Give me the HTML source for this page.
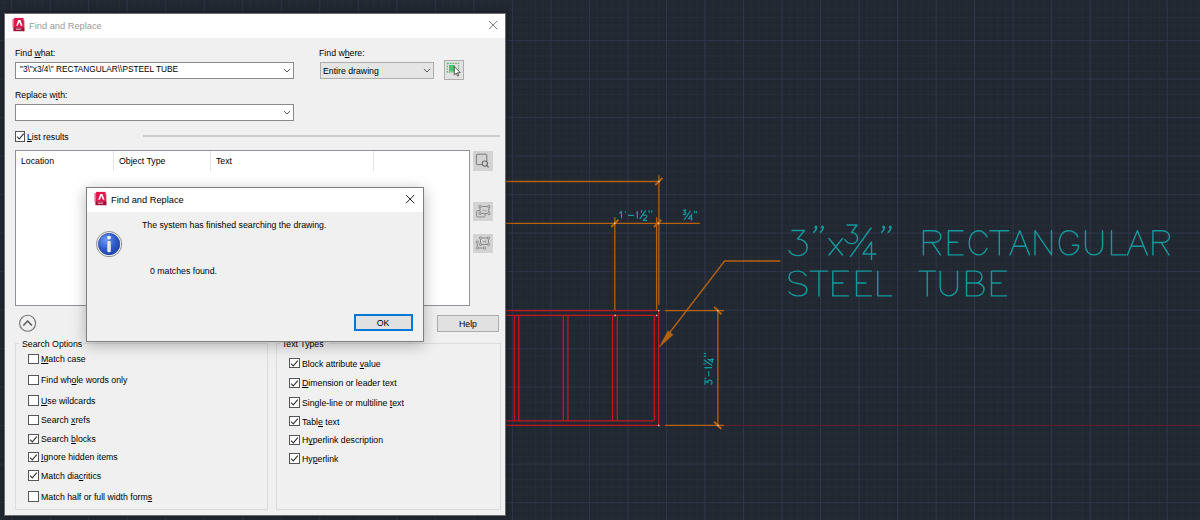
<!DOCTYPE html><html><head><meta charset="utf-8"><style>
html,body{margin:0;padding:0;}
body{width:1200px;height:520px;overflow:hidden;position:relative;background:#222832;font-family:"Liberation Sans",sans-serif;}
.a{position:absolute;box-sizing:border-box;}
.t{position:absolute;white-space:pre;line-height:1;font-family:"Liberation Sans",sans-serif;}
.cb{width:10.5px;height:10.5px;border:1px solid #555;background:#fff;}
u{text-decoration:underline;text-underline-offset:1px;}
</style></head><body>

<svg class="a" style="left:0;top:0" width="1200" height="520"><line x1="3.94" y1="0" x2="3.94" y2="520" stroke="#262d36" stroke-width="1"/><line x1="19.34" y1="0" x2="19.34" y2="520" stroke="#262d36" stroke-width="1"/><line x1="27.05" y1="0" x2="27.05" y2="520" stroke="#262d36" stroke-width="1"/><line x1="34.75" y1="0" x2="34.75" y2="520" stroke="#262d36" stroke-width="1"/><line x1="42.46" y1="0" x2="42.46" y2="520" stroke="#262d36" stroke-width="1"/><line x1="57.86" y1="0" x2="57.86" y2="520" stroke="#262d36" stroke-width="1"/><line x1="65.57" y1="0" x2="65.57" y2="520" stroke="#262d36" stroke-width="1"/><line x1="73.27" y1="0" x2="73.27" y2="520" stroke="#262d36" stroke-width="1"/><line x1="80.98" y1="0" x2="80.98" y2="520" stroke="#262d36" stroke-width="1"/><line x1="96.38" y1="0" x2="96.38" y2="520" stroke="#262d36" stroke-width="1"/><line x1="104.09" y1="0" x2="104.09" y2="520" stroke="#262d36" stroke-width="1"/><line x1="111.79" y1="0" x2="111.79" y2="520" stroke="#262d36" stroke-width="1"/><line x1="119.50" y1="0" x2="119.50" y2="520" stroke="#262d36" stroke-width="1"/><line x1="134.90" y1="0" x2="134.90" y2="520" stroke="#262d36" stroke-width="1"/><line x1="142.61" y1="0" x2="142.61" y2="520" stroke="#262d36" stroke-width="1"/><line x1="150.31" y1="0" x2="150.31" y2="520" stroke="#262d36" stroke-width="1"/><line x1="158.02" y1="0" x2="158.02" y2="520" stroke="#262d36" stroke-width="1"/><line x1="173.42" y1="0" x2="173.42" y2="520" stroke="#262d36" stroke-width="1"/><line x1="181.13" y1="0" x2="181.13" y2="520" stroke="#262d36" stroke-width="1"/><line x1="188.83" y1="0" x2="188.83" y2="520" stroke="#262d36" stroke-width="1"/><line x1="196.54" y1="0" x2="196.54" y2="520" stroke="#262d36" stroke-width="1"/><line x1="211.94" y1="0" x2="211.94" y2="520" stroke="#262d36" stroke-width="1"/><line x1="219.65" y1="0" x2="219.65" y2="520" stroke="#262d36" stroke-width="1"/><line x1="227.35" y1="0" x2="227.35" y2="520" stroke="#262d36" stroke-width="1"/><line x1="235.06" y1="0" x2="235.06" y2="520" stroke="#262d36" stroke-width="1"/><line x1="250.46" y1="0" x2="250.46" y2="520" stroke="#262d36" stroke-width="1"/><line x1="258.17" y1="0" x2="258.17" y2="520" stroke="#262d36" stroke-width="1"/><line x1="265.87" y1="0" x2="265.87" y2="520" stroke="#262d36" stroke-width="1"/><line x1="273.58" y1="0" x2="273.58" y2="520" stroke="#262d36" stroke-width="1"/><line x1="288.98" y1="0" x2="288.98" y2="520" stroke="#262d36" stroke-width="1"/><line x1="296.69" y1="0" x2="296.69" y2="520" stroke="#262d36" stroke-width="1"/><line x1="304.39" y1="0" x2="304.39" y2="520" stroke="#262d36" stroke-width="1"/><line x1="312.10" y1="0" x2="312.10" y2="520" stroke="#262d36" stroke-width="1"/><line x1="327.50" y1="0" x2="327.50" y2="520" stroke="#262d36" stroke-width="1"/><line x1="335.21" y1="0" x2="335.21" y2="520" stroke="#262d36" stroke-width="1"/><line x1="342.91" y1="0" x2="342.91" y2="520" stroke="#262d36" stroke-width="1"/><line x1="350.62" y1="0" x2="350.62" y2="520" stroke="#262d36" stroke-width="1"/><line x1="366.02" y1="0" x2="366.02" y2="520" stroke="#262d36" stroke-width="1"/><line x1="373.73" y1="0" x2="373.73" y2="520" stroke="#262d36" stroke-width="1"/><line x1="381.43" y1="0" x2="381.43" y2="520" stroke="#262d36" stroke-width="1"/><line x1="389.14" y1="0" x2="389.14" y2="520" stroke="#262d36" stroke-width="1"/><line x1="404.54" y1="0" x2="404.54" y2="520" stroke="#262d36" stroke-width="1"/><line x1="412.25" y1="0" x2="412.25" y2="520" stroke="#262d36" stroke-width="1"/><line x1="419.95" y1="0" x2="419.95" y2="520" stroke="#262d36" stroke-width="1"/><line x1="427.66" y1="0" x2="427.66" y2="520" stroke="#262d36" stroke-width="1"/><line x1="443.06" y1="0" x2="443.06" y2="520" stroke="#262d36" stroke-width="1"/><line x1="450.77" y1="0" x2="450.77" y2="520" stroke="#262d36" stroke-width="1"/><line x1="458.47" y1="0" x2="458.47" y2="520" stroke="#262d36" stroke-width="1"/><line x1="466.18" y1="0" x2="466.18" y2="520" stroke="#262d36" stroke-width="1"/><line x1="481.58" y1="0" x2="481.58" y2="520" stroke="#262d36" stroke-width="1"/><line x1="489.29" y1="0" x2="489.29" y2="520" stroke="#262d36" stroke-width="1"/><line x1="496.99" y1="0" x2="496.99" y2="520" stroke="#262d36" stroke-width="1"/><line x1="504.70" y1="0" x2="504.70" y2="520" stroke="#262d36" stroke-width="1"/><line x1="520.10" y1="0" x2="520.10" y2="520" stroke="#262d36" stroke-width="1"/><line x1="527.81" y1="0" x2="527.81" y2="520" stroke="#262d36" stroke-width="1"/><line x1="535.51" y1="0" x2="535.51" y2="520" stroke="#262d36" stroke-width="1"/><line x1="543.22" y1="0" x2="543.22" y2="520" stroke="#262d36" stroke-width="1"/><line x1="558.62" y1="0" x2="558.62" y2="520" stroke="#262d36" stroke-width="1"/><line x1="566.33" y1="0" x2="566.33" y2="520" stroke="#262d36" stroke-width="1"/><line x1="574.03" y1="0" x2="574.03" y2="520" stroke="#262d36" stroke-width="1"/><line x1="581.74" y1="0" x2="581.74" y2="520" stroke="#262d36" stroke-width="1"/><line x1="597.14" y1="0" x2="597.14" y2="520" stroke="#262d36" stroke-width="1"/><line x1="604.85" y1="0" x2="604.85" y2="520" stroke="#262d36" stroke-width="1"/><line x1="612.55" y1="0" x2="612.55" y2="520" stroke="#262d36" stroke-width="1"/><line x1="620.26" y1="0" x2="620.26" y2="520" stroke="#262d36" stroke-width="1"/><line x1="635.66" y1="0" x2="635.66" y2="520" stroke="#262d36" stroke-width="1"/><line x1="643.37" y1="0" x2="643.37" y2="520" stroke="#262d36" stroke-width="1"/><line x1="651.07" y1="0" x2="651.07" y2="520" stroke="#262d36" stroke-width="1"/><line x1="658.78" y1="0" x2="658.78" y2="520" stroke="#262d36" stroke-width="1"/><line x1="674.18" y1="0" x2="674.18" y2="520" stroke="#262d36" stroke-width="1"/><line x1="681.89" y1="0" x2="681.89" y2="520" stroke="#262d36" stroke-width="1"/><line x1="689.59" y1="0" x2="689.59" y2="520" stroke="#262d36" stroke-width="1"/><line x1="697.30" y1="0" x2="697.30" y2="520" stroke="#262d36" stroke-width="1"/><line x1="712.70" y1="0" x2="712.70" y2="520" stroke="#262d36" stroke-width="1"/><line x1="720.41" y1="0" x2="720.41" y2="520" stroke="#262d36" stroke-width="1"/><line x1="728.11" y1="0" x2="728.11" y2="520" stroke="#262d36" stroke-width="1"/><line x1="735.82" y1="0" x2="735.82" y2="520" stroke="#262d36" stroke-width="1"/><line x1="751.22" y1="0" x2="751.22" y2="520" stroke="#262d36" stroke-width="1"/><line x1="758.93" y1="0" x2="758.93" y2="520" stroke="#262d36" stroke-width="1"/><line x1="766.63" y1="0" x2="766.63" y2="520" stroke="#262d36" stroke-width="1"/><line x1="774.34" y1="0" x2="774.34" y2="520" stroke="#262d36" stroke-width="1"/><line x1="789.74" y1="0" x2="789.74" y2="520" stroke="#262d36" stroke-width="1"/><line x1="797.45" y1="0" x2="797.45" y2="520" stroke="#262d36" stroke-width="1"/><line x1="805.15" y1="0" x2="805.15" y2="520" stroke="#262d36" stroke-width="1"/><line x1="812.86" y1="0" x2="812.86" y2="520" stroke="#262d36" stroke-width="1"/><line x1="828.26" y1="0" x2="828.26" y2="520" stroke="#262d36" stroke-width="1"/><line x1="835.97" y1="0" x2="835.97" y2="520" stroke="#262d36" stroke-width="1"/><line x1="843.67" y1="0" x2="843.67" y2="520" stroke="#262d36" stroke-width="1"/><line x1="851.38" y1="0" x2="851.38" y2="520" stroke="#262d36" stroke-width="1"/><line x1="866.78" y1="0" x2="866.78" y2="520" stroke="#262d36" stroke-width="1"/><line x1="874.49" y1="0" x2="874.49" y2="520" stroke="#262d36" stroke-width="1"/><line x1="882.19" y1="0" x2="882.19" y2="520" stroke="#262d36" stroke-width="1"/><line x1="889.90" y1="0" x2="889.90" y2="520" stroke="#262d36" stroke-width="1"/><line x1="905.30" y1="0" x2="905.30" y2="520" stroke="#262d36" stroke-width="1"/><line x1="913.01" y1="0" x2="913.01" y2="520" stroke="#262d36" stroke-width="1"/><line x1="920.71" y1="0" x2="920.71" y2="520" stroke="#262d36" stroke-width="1"/><line x1="928.42" y1="0" x2="928.42" y2="520" stroke="#262d36" stroke-width="1"/><line x1="943.82" y1="0" x2="943.82" y2="520" stroke="#262d36" stroke-width="1"/><line x1="951.53" y1="0" x2="951.53" y2="520" stroke="#262d36" stroke-width="1"/><line x1="959.23" y1="0" x2="959.23" y2="520" stroke="#262d36" stroke-width="1"/><line x1="966.94" y1="0" x2="966.94" y2="520" stroke="#262d36" stroke-width="1"/><line x1="982.34" y1="0" x2="982.34" y2="520" stroke="#262d36" stroke-width="1"/><line x1="990.05" y1="0" x2="990.05" y2="520" stroke="#262d36" stroke-width="1"/><line x1="997.75" y1="0" x2="997.75" y2="520" stroke="#262d36" stroke-width="1"/><line x1="1005.46" y1="0" x2="1005.46" y2="520" stroke="#262d36" stroke-width="1"/><line x1="1020.86" y1="0" x2="1020.86" y2="520" stroke="#262d36" stroke-width="1"/><line x1="1028.57" y1="0" x2="1028.57" y2="520" stroke="#262d36" stroke-width="1"/><line x1="1036.27" y1="0" x2="1036.27" y2="520" stroke="#262d36" stroke-width="1"/><line x1="1043.98" y1="0" x2="1043.98" y2="520" stroke="#262d36" stroke-width="1"/><line x1="1059.38" y1="0" x2="1059.38" y2="520" stroke="#262d36" stroke-width="1"/><line x1="1067.09" y1="0" x2="1067.09" y2="520" stroke="#262d36" stroke-width="1"/><line x1="1074.79" y1="0" x2="1074.79" y2="520" stroke="#262d36" stroke-width="1"/><line x1="1082.50" y1="0" x2="1082.50" y2="520" stroke="#262d36" stroke-width="1"/><line x1="1097.90" y1="0" x2="1097.90" y2="520" stroke="#262d36" stroke-width="1"/><line x1="1105.61" y1="0" x2="1105.61" y2="520" stroke="#262d36" stroke-width="1"/><line x1="1113.31" y1="0" x2="1113.31" y2="520" stroke="#262d36" stroke-width="1"/><line x1="1121.02" y1="0" x2="1121.02" y2="520" stroke="#262d36" stroke-width="1"/><line x1="1136.42" y1="0" x2="1136.42" y2="520" stroke="#262d36" stroke-width="1"/><line x1="1144.13" y1="0" x2="1144.13" y2="520" stroke="#262d36" stroke-width="1"/><line x1="1151.83" y1="0" x2="1151.83" y2="520" stroke="#262d36" stroke-width="1"/><line x1="1159.54" y1="0" x2="1159.54" y2="520" stroke="#262d36" stroke-width="1"/><line x1="1174.94" y1="0" x2="1174.94" y2="520" stroke="#262d36" stroke-width="1"/><line x1="1182.65" y1="0" x2="1182.65" y2="520" stroke="#262d36" stroke-width="1"/><line x1="1190.35" y1="0" x2="1190.35" y2="520" stroke="#262d36" stroke-width="1"/><line x1="1198.06" y1="0" x2="1198.06" y2="520" stroke="#262d36" stroke-width="1"/><line x1="0" y1="9.80" x2="1200" y2="9.80" stroke="#262d36" stroke-width="1"/><line x1="0" y1="17.50" x2="1200" y2="17.50" stroke="#262d36" stroke-width="1"/><line x1="0" y1="25.20" x2="1200" y2="25.20" stroke="#262d36" stroke-width="1"/><line x1="0" y1="32.90" x2="1200" y2="32.90" stroke="#262d36" stroke-width="1"/><line x1="0" y1="48.30" x2="1200" y2="48.30" stroke="#262d36" stroke-width="1"/><line x1="0" y1="56.00" x2="1200" y2="56.00" stroke="#262d36" stroke-width="1"/><line x1="0" y1="63.70" x2="1200" y2="63.70" stroke="#262d36" stroke-width="1"/><line x1="0" y1="71.40" x2="1200" y2="71.40" stroke="#262d36" stroke-width="1"/><line x1="0" y1="86.80" x2="1200" y2="86.80" stroke="#262d36" stroke-width="1"/><line x1="0" y1="94.50" x2="1200" y2="94.50" stroke="#262d36" stroke-width="1"/><line x1="0" y1="102.20" x2="1200" y2="102.20" stroke="#262d36" stroke-width="1"/><line x1="0" y1="109.90" x2="1200" y2="109.90" stroke="#262d36" stroke-width="1"/><line x1="0" y1="125.30" x2="1200" y2="125.30" stroke="#262d36" stroke-width="1"/><line x1="0" y1="133.00" x2="1200" y2="133.00" stroke="#262d36" stroke-width="1"/><line x1="0" y1="140.70" x2="1200" y2="140.70" stroke="#262d36" stroke-width="1"/><line x1="0" y1="148.40" x2="1200" y2="148.40" stroke="#262d36" stroke-width="1"/><line x1="0" y1="163.80" x2="1200" y2="163.80" stroke="#262d36" stroke-width="1"/><line x1="0" y1="171.50" x2="1200" y2="171.50" stroke="#262d36" stroke-width="1"/><line x1="0" y1="179.20" x2="1200" y2="179.20" stroke="#262d36" stroke-width="1"/><line x1="0" y1="186.90" x2="1200" y2="186.90" stroke="#262d36" stroke-width="1"/><line x1="0" y1="202.30" x2="1200" y2="202.30" stroke="#262d36" stroke-width="1"/><line x1="0" y1="210.00" x2="1200" y2="210.00" stroke="#262d36" stroke-width="1"/><line x1="0" y1="217.70" x2="1200" y2="217.70" stroke="#262d36" stroke-width="1"/><line x1="0" y1="225.40" x2="1200" y2="225.40" stroke="#262d36" stroke-width="1"/><line x1="0" y1="240.80" x2="1200" y2="240.80" stroke="#262d36" stroke-width="1"/><line x1="0" y1="248.50" x2="1200" y2="248.50" stroke="#262d36" stroke-width="1"/><line x1="0" y1="256.20" x2="1200" y2="256.20" stroke="#262d36" stroke-width="1"/><line x1="0" y1="263.90" x2="1200" y2="263.90" stroke="#262d36" stroke-width="1"/><line x1="0" y1="279.30" x2="1200" y2="279.30" stroke="#262d36" stroke-width="1"/><line x1="0" y1="287.00" x2="1200" y2="287.00" stroke="#262d36" stroke-width="1"/><line x1="0" y1="294.70" x2="1200" y2="294.70" stroke="#262d36" stroke-width="1"/><line x1="0" y1="302.40" x2="1200" y2="302.40" stroke="#262d36" stroke-width="1"/><line x1="0" y1="317.80" x2="1200" y2="317.80" stroke="#262d36" stroke-width="1"/><line x1="0" y1="325.50" x2="1200" y2="325.50" stroke="#262d36" stroke-width="1"/><line x1="0" y1="333.20" x2="1200" y2="333.20" stroke="#262d36" stroke-width="1"/><line x1="0" y1="340.90" x2="1200" y2="340.90" stroke="#262d36" stroke-width="1"/><line x1="0" y1="356.30" x2="1200" y2="356.30" stroke="#262d36" stroke-width="1"/><line x1="0" y1="364.00" x2="1200" y2="364.00" stroke="#262d36" stroke-width="1"/><line x1="0" y1="371.70" x2="1200" y2="371.70" stroke="#262d36" stroke-width="1"/><line x1="0" y1="379.40" x2="1200" y2="379.40" stroke="#262d36" stroke-width="1"/><line x1="0" y1="394.80" x2="1200" y2="394.80" stroke="#262d36" stroke-width="1"/><line x1="0" y1="402.50" x2="1200" y2="402.50" stroke="#262d36" stroke-width="1"/><line x1="0" y1="410.20" x2="1200" y2="410.20" stroke="#262d36" stroke-width="1"/><line x1="0" y1="417.90" x2="1200" y2="417.90" stroke="#262d36" stroke-width="1"/><line x1="0" y1="433.30" x2="1200" y2="433.30" stroke="#262d36" stroke-width="1"/><line x1="0" y1="441.00" x2="1200" y2="441.00" stroke="#262d36" stroke-width="1"/><line x1="0" y1="448.70" x2="1200" y2="448.70" stroke="#262d36" stroke-width="1"/><line x1="0" y1="456.40" x2="1200" y2="456.40" stroke="#262d36" stroke-width="1"/><line x1="0" y1="471.80" x2="1200" y2="471.80" stroke="#262d36" stroke-width="1"/><line x1="0" y1="479.50" x2="1200" y2="479.50" stroke="#262d36" stroke-width="1"/><line x1="0" y1="487.20" x2="1200" y2="487.20" stroke="#262d36" stroke-width="1"/><line x1="0" y1="494.90" x2="1200" y2="494.90" stroke="#262d36" stroke-width="1"/><line x1="0" y1="510.30" x2="1200" y2="510.30" stroke="#262d36" stroke-width="1"/><line x1="0" y1="518.00" x2="1200" y2="518.00" stroke="#262d36" stroke-width="1"/><line x1="11.64" y1="0" x2="11.64" y2="520" stroke="#30374a" stroke-width="1"/><line x1="50.16" y1="0" x2="50.16" y2="520" stroke="#30374a" stroke-width="1"/><line x1="88.68" y1="0" x2="88.68" y2="520" stroke="#30374a" stroke-width="1"/><line x1="127.20" y1="0" x2="127.20" y2="520" stroke="#30374a" stroke-width="1"/><line x1="165.72" y1="0" x2="165.72" y2="520" stroke="#30374a" stroke-width="1"/><line x1="204.24" y1="0" x2="204.24" y2="520" stroke="#30374a" stroke-width="1"/><line x1="242.76" y1="0" x2="242.76" y2="520" stroke="#30374a" stroke-width="1"/><line x1="281.28" y1="0" x2="281.28" y2="520" stroke="#30374a" stroke-width="1"/><line x1="319.80" y1="0" x2="319.80" y2="520" stroke="#30374a" stroke-width="1"/><line x1="358.32" y1="0" x2="358.32" y2="520" stroke="#30374a" stroke-width="1"/><line x1="396.84" y1="0" x2="396.84" y2="520" stroke="#30374a" stroke-width="1"/><line x1="435.36" y1="0" x2="435.36" y2="520" stroke="#30374a" stroke-width="1"/><line x1="473.88" y1="0" x2="473.88" y2="520" stroke="#30374a" stroke-width="1"/><line x1="512.40" y1="0" x2="512.40" y2="520" stroke="#30374a" stroke-width="1"/><line x1="550.92" y1="0" x2="550.92" y2="520" stroke="#30374a" stroke-width="1"/><line x1="589.44" y1="0" x2="589.44" y2="520" stroke="#30374a" stroke-width="1"/><line x1="627.96" y1="0" x2="627.96" y2="520" stroke="#30374a" stroke-width="1"/><line x1="666.48" y1="0" x2="666.48" y2="520" stroke="#30374a" stroke-width="1"/><line x1="705.00" y1="0" x2="705.00" y2="520" stroke="#30374a" stroke-width="1"/><line x1="743.52" y1="0" x2="743.52" y2="520" stroke="#30374a" stroke-width="1"/><line x1="782.04" y1="0" x2="782.04" y2="520" stroke="#30374a" stroke-width="1"/><line x1="820.56" y1="0" x2="820.56" y2="520" stroke="#30374a" stroke-width="1"/><line x1="859.08" y1="0" x2="859.08" y2="520" stroke="#30374a" stroke-width="1"/><line x1="897.60" y1="0" x2="897.60" y2="520" stroke="#30374a" stroke-width="1"/><line x1="936.12" y1="0" x2="936.12" y2="520" stroke="#30374a" stroke-width="1"/><line x1="974.64" y1="0" x2="974.64" y2="520" stroke="#30374a" stroke-width="1"/><line x1="1013.16" y1="0" x2="1013.16" y2="520" stroke="#30374a" stroke-width="1"/><line x1="1051.68" y1="0" x2="1051.68" y2="520" stroke="#30374a" stroke-width="1"/><line x1="1090.20" y1="0" x2="1090.20" y2="520" stroke="#30374a" stroke-width="1"/><line x1="1128.72" y1="0" x2="1128.72" y2="520" stroke="#30374a" stroke-width="1"/><line x1="1167.24" y1="0" x2="1167.24" y2="520" stroke="#30374a" stroke-width="1"/><line x1="0" y1="2.10" x2="1200" y2="2.10" stroke="#262d36" stroke-width="1"/><line x1="0" y1="40.60" x2="1200" y2="40.60" stroke="#30374a" stroke-width="1"/><line x1="0" y1="79.10" x2="1200" y2="79.10" stroke="#30374a" stroke-width="1"/><line x1="0" y1="117.60" x2="1200" y2="117.60" stroke="#30374a" stroke-width="1"/><line x1="0" y1="156.10" x2="1200" y2="156.10" stroke="#30374a" stroke-width="1"/><line x1="0" y1="194.60" x2="1200" y2="194.60" stroke="#30374a" stroke-width="1"/><line x1="0" y1="233.10" x2="1200" y2="233.10" stroke="#30374a" stroke-width="1"/><line x1="0" y1="271.60" x2="1200" y2="271.60" stroke="#30374a" stroke-width="1"/><line x1="0" y1="310.10" x2="1200" y2="310.10" stroke="#30374a" stroke-width="1"/><line x1="0" y1="348.60" x2="1200" y2="348.60" stroke="#30374a" stroke-width="1"/><line x1="0" y1="387.10" x2="1200" y2="387.10" stroke="#30374a" stroke-width="1"/><line x1="0" y1="425.60" x2="1200" y2="425.60" stroke="#30374a" stroke-width="1"/><line x1="0" y1="464.10" x2="1200" y2="464.10" stroke="#30374a" stroke-width="1"/><line x1="0" y1="502.60" x2="1200" y2="502.60" stroke="#30374a" stroke-width="1"/><line x1="500" y1="310.6" x2="658.7" y2="310.6" stroke="#c8161e" stroke-width="1.3"/><line x1="500" y1="315.4" x2="654.4" y2="315.4" stroke="#c8161e" stroke-width="1.3"/><line x1="500" y1="420.8" x2="654.4" y2="420.8" stroke="#c8161e" stroke-width="1.3"/><line x1="500" y1="425.4" x2="658.7" y2="425.4" stroke="#c8161e" stroke-width="1.3"/><line x1="514.4" y1="315.4" x2="514.4" y2="420.8" stroke="#c8161e" stroke-width="1.3"/><line x1="518.8" y1="315.4" x2="518.8" y2="420.8" stroke="#c8161e" stroke-width="1.3"/><line x1="563.3" y1="315.4" x2="563.3" y2="420.8" stroke="#c8161e" stroke-width="1.3"/><line x1="567.9" y1="315.4" x2="567.9" y2="420.8" stroke="#c8161e" stroke-width="1.3"/><line x1="612.5" y1="315.4" x2="612.5" y2="420.8" stroke="#c8161e" stroke-width="1.3"/><line x1="617.3" y1="315.4" x2="617.3" y2="420.8" stroke="#c8161e" stroke-width="1.3"/><line x1="654.3" y1="315.4" x2="654.3" y2="420.8" stroke="#c8161e" stroke-width="1.3"/><line x1="658.7" y1="310.6" x2="658.7" y2="425.4" stroke="#c8161e" stroke-width="1.3"/><line x1="658.7" y1="425.4" x2="1200" y2="425.4" stroke="#5c2129" stroke-width="1.0"/><line x1="500" y1="181.5" x2="658.9" y2="181.5" stroke="#b5620f" stroke-width="1.3"/><line x1="658.9" y1="175.2" x2="658.9" y2="304.8" stroke="#b5620f" stroke-width="1.3"/><line x1="500" y1="223.4" x2="699.9" y2="223.4" stroke="#b5620f" stroke-width="1.3"/><line x1="614.8" y1="217.3" x2="614.8" y2="310" stroke="#b5620f" stroke-width="1.3"/><line x1="656.6" y1="217.3" x2="656.6" y2="309.6" stroke="#b5620f" stroke-width="1.3"/><line x1="655.3" y1="185.1" x2="662.5" y2="177.9" stroke="#b5620f" stroke-width="2"/><line x1="611.1999999999999" y1="227.0" x2="618.4" y2="219.8" stroke="#b5620f" stroke-width="2"/><line x1="654.0" y1="227.0" x2="661.2" y2="219.8" stroke="#b5620f" stroke-width="2"/><line x1="665" y1="310.6" x2="724" y2="310.6" stroke="#b5620f" stroke-width="1.3"/><line x1="717.9" y1="310.6" x2="717.9" y2="425.4" stroke="#b5620f" stroke-width="1.3"/><line x1="665" y1="425.4" x2="724" y2="425.4" stroke="#b5620f" stroke-width="1.3"/><line x1="714.1999999999999" y1="307.0" x2="721.4" y2="314.20000000000005" stroke="#b5620f" stroke-width="2"/><line x1="714.1999999999999" y1="421.79999999999995" x2="721.4" y2="429.0" stroke="#b5620f" stroke-width="2"/><polyline points="780.4,261 724.6,261 664,340" fill="none" stroke="#b5620f" stroke-width="1.3"/><polygon points="658.5,348 668.0,330.6 673.4,334.8" fill="#b5620f"/><path transform="translate(619.4,218.6)" d="M0,-5.1L2.1,-7V0M6,-7.4V-5.8M8.5,-3.2H14.4M16.9,-5.4L18,-6.6V0M20.5,0.2L26.4,-8.3M22.2,-8.6V-5.6M23.9,-2.8C24.5,-3.8 27.6,-3.8 27.6,-2C27.6,-1 24,1 23.9,1.8H27.6M29.6,-8.3V-5.9M32.4,-8.3V-5.9" fill="none" stroke="#13999e" stroke-width="1.15"/><path transform="translate(683,219.2)" d="M0.2,-9.1H2.6L1.3,-7.3C2.5,-7.3 2.9,-6.6 2.9,-6C2.9,-5.1 2.2,-4.6 1.3,-4.6C0.7,-4.6 0.2,-5 0,-5.3M1.2,0.6L7.4,-8.3M8.6,1.5V-4.5L5.6,-0.5H9.6M11.4,-8.3V-5.9M13.5,-8.3V-5.9" fill="none" stroke="#13999e" stroke-width="1.15"/><path transform="translate(712,384.7) rotate(-90)" d="M0,-7H4L2,-4.2C4,-4.2 4.6,-3 4.6,-2C4.6,-0.6 3.5,0 2.3,0C1.3,0 0.5,-0.5 0,-1.2M6.3,-7.4V-5.8M8.5,-3.2H13.8M16,-5.4L17.1,-6.6V0M19.2,0.2L25,-8.3M21,-8.6V-5.6M25.2,2V-3.4L22.5,0.4H26.5M28.6,-8.3V-5.9M31.2,-8.3V-5.9" fill="none" stroke="#13999e" stroke-width="1.15"/><path d="M923.4,254.9V230.7H933.971A6.929000000000002,5.929000000000002 0 0 1 933.971,242.558H923.4M932.15,242.558L940.4,254.9 M963.1,230.7H948.4V254.9H963.1M948.4,242.316H957.6 M987,236.89999999999998C985,232.2 981,230.7 979.1,230.7C972.2,230.7 969.2,236.7 969.2,242.8C969.2,248.9 972.2,254.9 979.1,254.9C981,254.9 985,253.4 987,248.3 M990,230.7H1008.7M999.35,230.7V254.9 M1010,254.9L1019.75,230.7L1029.5,254.9M1013.51,246.188H1025.99 M1035,254.9V230.7L1051.5,254.9V230.7 M1077.9,236.89999999999998C1075.9,232.2 1072.4,230.7 1068.8000000000002,230.7C1062.2,230.7 1059.2,236.7 1059.2,242.8C1059.2,248.9 1062.2,254.9 1068.8000000000002,254.9C1074.4,254.9 1078.4,250.9 1078.4,246.4V245.22H1072.4 M1085.5,230.7V246.4A8.5,8.5 0 0 0 1102.5,246.4V230.7 M1111.5,230.7V254.9H1125.7 M1127.4,254.9L1137.4,230.7L1147.4,254.9M1131.0,246.188H1143.8000000000002 M1152.9,254.9V230.7H1162.571A6.929000000000002,5.929000000000002 0 0 1 1162.571,242.558H1152.9M1161.2,242.558L1169.0,254.9 M805.8,275.6C803.8,272.1 800.8,271.1 797.9,271.1C792,271.1 789,273.1 789,277.1C789,281.756 793,282.756 797.9,283.45599999999996C803.8,284.256 806.8,286.756 806.8,289.4C806.8,293.9 802.8,295.9 797.9,295.9C794,295.9 791,294.4 789,291.9 M810.3,271.1H827.6M818.95,271.1V295.9 M848.4,271.1H832.8V295.9H848.4M832.8,283.004H842.9 M871.4,271.1H856.5V295.9H871.4M856.5,283.004H865.9 M877.7,271.1V295.9H891.7 M919,271.1H935.5M927.25,271.1V295.9 M940.2,271.1V287.25A8.649999999999977,8.649999999999977 0 0 0 957.5,287.25V271.1 M966.5,271.1V295.9H976.552A7.447999999999979,6.447999999999979 0 0 0 976.552,283.004H966.5M966.5,271.1H975.548A6.451999999999998,5.951999999999998 0 0 1 975.548,283.004 M1006.5,271.1H991.5V295.9H1006.5M991.5,283.004H1001.0 M792,230.5H804.5L797.5,239C803,239 807.2,242.5 807.2,247.5C807.2,252.5 803,255.6 798,255.6C794,255.6 790.5,253.5 789,250.5 M829,238.5L842.5,255M842.5,238.5L829,255 M847,225H857L851.5,232.5C855,232.5 857.5,235 857.5,238.2C857.5,241.5 855,243.6 851.5,243.6C848.5,243.6 846.2,242 845,239.5 M850.5,256.5L871,228 M871.5,259.5V242L863,254H875.8" fill="none" stroke="#13999e" stroke-width="1.4" stroke-linecap="round" stroke-linejoin="round"/><path d="M815.6,226.3 q0.9,0 0.9,1.3 q0,2.6 -2.6,4.6" fill="none" stroke="#13999e" stroke-width="1.7" stroke-linecap="round"/><circle cx="815.7" cy="227.3" r="1.2" fill="#13999e"/><path d="M822.2,226.3 q0.9,0 0.9,1.3 q0,2.6 -2.6,4.6" fill="none" stroke="#13999e" stroke-width="1.7" stroke-linecap="round"/><circle cx="822.3000000000001" cy="227.3" r="1.2" fill="#13999e"/><path d="M883.4,226.3 q0.9,0 0.9,1.3 q0,2.6 -2.6,4.6" fill="none" stroke="#13999e" stroke-width="1.7" stroke-linecap="round"/><circle cx="883.5" cy="227.3" r="1.2" fill="#13999e"/><path d="M890.0,226.3 q0.9,0 0.9,1.3 q0,2.6 -2.6,4.6" fill="none" stroke="#13999e" stroke-width="1.7" stroke-linecap="round"/><circle cx="890.1" cy="227.3" r="1.2" fill="#13999e"/><circle cx="658.7" cy="425.4" r="0.9" fill="#e8e0d8" opacity="0.8"/><circle cx="718" cy="425.4" r="0.9" fill="#e8e0d8" opacity="0.8"/><circle cx="656.6" cy="315.4" r="0.9" fill="#e8e0d8" opacity="0.8"/><circle cx="615.1" cy="315.4" r="0.9" fill="#e8e0d8" opacity="0.8"/><circle cx="614.8" cy="223.4" r="0.9" fill="#e8e0d8" opacity="0.8"/><circle cx="658.5" cy="223.4" r="0.9" fill="#e8e0d8" opacity="0.8"/><circle cx="658.9" cy="181.5" r="0.9" fill="#e8e0d8" opacity="0.8"/><circle cx="717.9" cy="310.6" r="0.9" fill="#e8e0d8" opacity="0.8"/><circle cx="658.7" cy="310.6" r="0.9" fill="#e8e0d8" opacity="0.8"/></svg>
<div class="a" style="left:4px;top:13px;width:502px;height:503px;border:1px solid #6a6c70;background:#f0f0f0;box-shadow:0 0 7px 1px rgba(0,0,0,0.35);"></div>
<div class="a" style="left:5px;top:14px;width:500px;height:24px;background:#fff;"></div>
<svg class="a" style="left:11.8px;top:17.3px" width="14" height="15" viewBox="0 0 14 15"><rect x="0.4" y="2.1" width="3" height="8.6" fill="#ee6a8a"/><rect x="2.1" y="0.9" width="9.5" height="9.6" fill="#e3164b"/><rect x="11.4" y="3.3" width="0.9" height="11" fill="#a90d39"/><rect x="1.4" y="10.3" width="10.9" height="3.9" fill="#a00d37"/><polygon points="4.2,8.8 6.3,3.0 8.4,3.0 10.5,8.8 8.9,8.8 7.35,4.9 5.8,8.8" fill="#fff"/><rect x="3.8" y="11.6" width="5.4" height="1.1" fill="#f0b8c8"/></svg>
<div class="t" style="left:28.80px;top:20.82px;font-size:9.9px;color:#999;transform:scaleX(0.94);transform-origin:0 0;">Find and Replace</div>
<svg class="a" style="left:487.59999999999997px;top:19.9px" width="10.2" height="10.2"><path d="M1,1L9.2,9.2M9.2,1L1,9.2" stroke="#777" stroke-width="1.0"/></svg>
<div class="t" style="left:14.50px;top:47.87px;font-size:9.6px;color:#000;transform:scaleX(0.91);transform-origin:0 0;">Find <u>w</u>hat:</div>
<div class="a" style="left:15px;top:62px;width:279px;height:17px;border:1px solid #8a8a8a;background:#fff;"></div>
<div class="t" style="left:19.70px;top:65.31px;font-size:9.2px;color:#000;transform:scaleX(0.9);transform-origin:0 0;">"3\"x3/4\" RECTANGULAR\\PSTEEL TUBE</div>
<svg class="a" style="left:281.8px;top:66.6px" width="10" height="8"><path d="M1.9,2.0 L5,5.0 L8.1,2.0" fill="none" stroke="#555" stroke-width="1"/></svg>
<div class="t" style="left:319.20px;top:47.97px;font-size:9.6px;color:#000;transform:scaleX(0.91);transform-origin:0 0;">Find w<u>h</u>ere:</div>
<div class="a" style="left:319.5px;top:62px;width:114.5px;height:17px;border:1px solid #adadad;background:#e5e5e5;"></div>
<div class="t" style="left:322.70px;top:65.67px;font-size:9.6px;color:#000;transform:scaleX(0.91);transform-origin:0 0;">Entire drawing</div>
<svg class="a" style="left:421.6px;top:66.6px" width="10" height="8"><path d="M1.9,2.0 L5,5.0 L8.1,2.0" fill="none" stroke="#555" stroke-width="1"/></svg>
<div class="a" style="left:444px;top:60px;width:19.5px;height:20px;border:1px solid #adadad;background:#e1e1e1;"></div>
<svg class="a" style="left:444px;top:60px" width="20" height="20">
<rect x="3.4" y="3.4" width="11.2" height="8.9" fill="none" stroke="#48b868" stroke-width="1.1" stroke-dasharray="1.4,1.2"/>
<rect x="5" y="5" width="6" height="6.6" fill="#4fc374"/>
<polygon points="10.3,6.5 10.3,15.1 12.25,13.1 13.6,16.1 14.75,15.5 13.5,12.7 16.2,12.7" fill="#fff" stroke="#333" stroke-width="0.8"/>
</svg>
<div class="t" style="left:14.50px;top:90.17px;font-size:9.6px;color:#000;transform:scaleX(0.91);transform-origin:0 0;">Replace w<u>i</u>th:</div>
<div class="a" style="left:15px;top:104px;width:279px;height:17px;border:1px solid #8a8a8a;background:#fff;"></div>
<svg class="a" style="left:281.8px;top:108.6px" width="10" height="8"><path d="M1.9,2.0 L5,5.0 L8.1,2.0" fill="none" stroke="#555" stroke-width="1"/></svg>
<div class="a cb" style="left:14.7px;top:131.3px"></div><svg class="a" style="left:14.7px;top:131.3px" width="11" height="11"><path d="M2,5.6 L4.3,7.9 L8.8,2.6" fill="none" stroke="#333" stroke-width="1.1"/></svg>
<div class="t" style="left:27.40px;top:131.97px;font-size:9.6px;color:#000;transform:scaleX(0.91);transform-origin:0 0;"><u>L</u>ist results</div>
<div class="a" style="left:142.7px;top:135.2px;width:357.3px;height:1.6000000000000227px;background:#cdcdcd;"></div>
<div class="a" style="left:15px;top:150px;width:455px;height:156px;border:1px solid #8f9399;background:#fff;"></div>
<div class="t" style="left:20.60px;top:155.77px;font-size:9.6px;color:#000;transform:scaleX(0.91);transform-origin:0 0;">Location</div>
<div class="t" style="left:118.70px;top:155.77px;font-size:9.6px;color:#000;transform:scaleX(0.91);transform-origin:0 0;">Object Type</div>
<div class="t" style="left:216.10px;top:155.77px;font-size:9.6px;color:#000;transform:scaleX(0.91);transform-origin:0 0;">Text</div>
<div class="a" style="left:113.0px;top:151px;width:1.0px;height:19.5px;background:#e5e5e5;"></div>
<div class="a" style="left:210.4px;top:151px;width:1.0px;height:19.5px;background:#e5e5e5;"></div>
<div class="a" style="left:372.8px;top:151px;width:1.0px;height:19.5px;background:#e5e5e5;"></div>
<div class="a" style="left:473px;top:151px;width:20px;height:19.5px;background:#d3d3d3;"></div>
<div class="a" style="left:473px;top:201.7px;width:20px;height:19.30000000000001px;background:#d3d3d3;"></div>
<div class="a" style="left:473px;top:233.5px;width:20px;height:19.5px;background:#d3d3d3;"></div>
<svg class="a" style="left:473px;top:151px" width="20" height="20">
<rect x="3.4" y="3.2" width="10.4" height="10.4" rx="0.8" fill="none" stroke="#7a7a7a" stroke-width="1"/>
<circle cx="11.8" cy="12.6" r="2.6" fill="#d3d3d3" stroke="#6a6a6a" stroke-width="1.1"/>
<path d="M13.7,14.5 L15.6,16.4" stroke="#6a6a6a" stroke-width="1.3"/>
</svg>
<svg class="a" style="left:473px;top:201.7px" width="20" height="20">
<path d="M7,8.55 H4.6 Q3.6,8.55 3.6,9.55 V13.9 Q3.6,14.9 4.6,14.9 H11 Q12,14.9 12,13.9 V11.8" fill="none" stroke="#858585" stroke-width="0.9"/>
<rect x="7" y="4.5" width="8.8" height="7" fill="#d3d3d3" stroke="#858585" stroke-width="0.9"/>
<circle cx="7" cy="4.5" r="1.2" fill="#c8c8c8" stroke="#858585" stroke-width="0.8"/><circle cx="15.8" cy="4.5" r="1.2" fill="#c8c8c8" stroke="#858585" stroke-width="0.8"/>
<circle cx="7" cy="11.5" r="1.2" fill="#c8c8c8" stroke="#858585" stroke-width="0.8"/><circle cx="15.8" cy="11.5" r="1.2" fill="#c8c8c8" stroke="#858585" stroke-width="0.8"/>
<path d="M9.6,8.6 q1,-1 2,0 t2,0" fill="none" stroke="#8a8a8a" stroke-width="0.8"/>
</svg>
<svg class="a" style="left:473px;top:233.5px" width="20" height="20">
<path d="M4.3,8 V14 H11.5" fill="none" stroke="#858585" stroke-width="0.9"/>
<rect x="7.5" y="4" width="8" height="6.5" fill="#d3d3d3" stroke="#858585" stroke-width="0.9"/>
<circle cx="7.5" cy="4" r="1.2" fill="#c8c8c8" stroke="#858585" stroke-width="0.8"/><circle cx="15.5" cy="4" r="1.2" fill="#c8c8c8" stroke="#858585" stroke-width="0.8"/>
<circle cx="7.5" cy="10.5" r="1.2" fill="#c8c8c8" stroke="#858585" stroke-width="0.8"/><circle cx="15.5" cy="10.5" r="1.2" fill="#c8c8c8" stroke="#858585" stroke-width="0.8"/>
<circle cx="4.3" cy="8" r="1.2" fill="#d3d3d3" stroke="#858585" stroke-width="0.8"/><circle cx="4.3" cy="14" r="1.2" fill="#d3d3d3" stroke="#858585" stroke-width="0.8"/><circle cx="11.5" cy="14" r="1.2" fill="#d3d3d3" stroke="#858585" stroke-width="0.8"/>
<path d="M9.8,7.6 H12 M13.4,6.4 L11.8,7.6 L13.4,8.8" fill="none" stroke="#8a8a8a" stroke-width="0.8"/>
</svg>
<svg class="a" style="left:17px;top:313px" width="22" height="22">
<circle cx="10.6" cy="10.3" r="8.0" fill="none" stroke="#707070" stroke-width="1.1"/>
<path d="M6.3,12.5 L10.6,8.1 L14.9,12.5" fill="none" stroke="#555" stroke-width="1.5"/>
</svg>
<div class="a" style="left:437px;top:315px;width:62px;height:17px;border:1px solid #adadad;background:#e1e1e1;"></div>
<div class="t" style="left:437.70px;width:60px;text-align:center;top:319.07px;font-size:9.6px;color:#000;transform:scaleX(0.91)">Help</div>
<div class="a" style="left:15px;top:343px;width:253px;height:167px;border:1px solid #dcdcdc;"></div>
<div class="a" style="left:19px;top:338px;width:65px;height:12px;background:#f0f0f0;"></div>
<div class="t" style="left:21.60px;top:338.77px;font-size:9.6px;color:#000;transform:scaleX(0.91);transform-origin:0 0;">Search Options</div>
<div class="a" style="left:275.5px;top:343px;width:225.5px;height:167px;border:1px solid #dcdcdc;"></div>
<div class="a" style="left:280px;top:338px;width:48.5px;height:12px;background:#f0f0f0;"></div>
<div class="t" style="left:282.20px;top:338.87px;font-size:9.6px;color:#000;transform:scaleX(0.91);transform-origin:0 0;">Text Types</div>
<div class="a cb" style="left:28.2px;top:353.5px"></div>
<div class="t" style="left:41.20px;top:354.37px;font-size:9.6px;color:#000;transform:scaleX(0.91);transform-origin:0 0;"><u>M</u>atch case</div>
<div class="a cb" style="left:28.2px;top:374.6px"></div>
<div class="t" style="left:41.20px;top:375.47px;font-size:9.6px;color:#000;transform:scaleX(0.91);transform-origin:0 0;">Find wh<u>o</u>le words only</div>
<div class="a cb" style="left:28.2px;top:395.2px"></div>
<div class="t" style="left:41.20px;top:396.07px;font-size:9.6px;color:#000;transform:scaleX(0.91);transform-origin:0 0;"><u>U</u>se wildcards</div>
<div class="a cb" style="left:28.2px;top:414.6px"></div>
<div class="t" style="left:41.20px;top:415.47px;font-size:9.6px;color:#000;transform:scaleX(0.91);transform-origin:0 0;">Search <u>x</u>refs</div>
<div class="a cb" style="left:28.2px;top:433.5px"></div><svg class="a" style="left:28.2px;top:433.5px" width="11" height="11"><path d="M2,5.6 L4.3,7.9 L8.8,2.6" fill="none" stroke="#333" stroke-width="1.1"/></svg>
<div class="t" style="left:41.20px;top:434.37px;font-size:9.6px;color:#000;transform:scaleX(0.91);transform-origin:0 0;">Search <u>b</u>locks</div>
<div class="a cb" style="left:28.2px;top:451.5px"></div><svg class="a" style="left:28.2px;top:451.5px" width="11" height="11"><path d="M2,5.6 L4.3,7.9 L8.8,2.6" fill="none" stroke="#333" stroke-width="1.1"/></svg>
<div class="t" style="left:41.20px;top:452.37px;font-size:9.6px;color:#000;transform:scaleX(0.91);transform-origin:0 0;"><u>I</u>gnore hidden items</div>
<div class="a cb" style="left:28.2px;top:470px"></div><svg class="a" style="left:28.2px;top:470px" width="11" height="11"><path d="M2,5.6 L4.3,7.9 L8.8,2.6" fill="none" stroke="#333" stroke-width="1.1"/></svg>
<div class="t" style="left:41.20px;top:470.87px;font-size:9.6px;color:#000;transform:scaleX(0.91);transform-origin:0 0;">Match dia<u>c</u>ritics</div>
<div class="a cb" style="left:28.2px;top:491.2px"></div>
<div class="t" style="left:41.20px;top:492.07px;font-size:9.6px;color:#000;transform:scaleX(0.91);transform-origin:0 0;">Match half or full width form<u>s</u></div>
<div class="a cb" style="left:289.3px;top:357.7px"></div><svg class="a" style="left:289.3px;top:357.7px" width="11" height="11"><path d="M2,5.6 L4.3,7.9 L8.8,2.6" fill="none" stroke="#333" stroke-width="1.1"/></svg>
<div class="t" style="left:301.90px;top:358.57px;font-size:9.6px;color:#000;transform:scaleX(0.91);transform-origin:0 0;">Block attribute <u>v</u>alue</div>
<div class="a cb" style="left:289.3px;top:377.6px"></div><svg class="a" style="left:289.3px;top:377.6px" width="11" height="11"><path d="M2,5.6 L4.3,7.9 L8.8,2.6" fill="none" stroke="#333" stroke-width="1.1"/></svg>
<div class="t" style="left:301.90px;top:378.47px;font-size:9.6px;color:#000;transform:scaleX(0.91);transform-origin:0 0;"><u>D</u>imension or leader text</div>
<div class="a cb" style="left:289.3px;top:397.2px"></div><svg class="a" style="left:289.3px;top:397.2px" width="11" height="11"><path d="M2,5.6 L4.3,7.9 L8.8,2.6" fill="none" stroke="#333" stroke-width="1.1"/></svg>
<div class="t" style="left:301.90px;top:398.07px;font-size:9.6px;color:#000;transform:scaleX(0.91);transform-origin:0 0;">Single-line or multiline <u>t</u>ext</div>
<div class="a cb" style="left:289.3px;top:415.7px"></div><svg class="a" style="left:289.3px;top:415.7px" width="11" height="11"><path d="M2,5.6 L4.3,7.9 L8.8,2.6" fill="none" stroke="#333" stroke-width="1.1"/></svg>
<div class="t" style="left:301.90px;top:416.57px;font-size:9.6px;color:#000;transform:scaleX(0.91);transform-origin:0 0;">Tabl<u>e</u> text</div>
<div class="a cb" style="left:289.3px;top:434.6px"></div><svg class="a" style="left:289.3px;top:434.6px" width="11" height="11"><path d="M2,5.6 L4.3,7.9 L8.8,2.6" fill="none" stroke="#333" stroke-width="1.1"/></svg>
<div class="t" style="left:301.90px;top:435.47px;font-size:9.6px;color:#000;transform:scaleX(0.91);transform-origin:0 0;">H<u>y</u>perlink description</div>
<div class="a cb" style="left:289.3px;top:453.1px"></div><svg class="a" style="left:289.3px;top:453.1px" width="11" height="11"><path d="M2,5.6 L4.3,7.9 L8.8,2.6" fill="none" stroke="#333" stroke-width="1.1"/></svg>
<div class="t" style="left:301.90px;top:453.97px;font-size:9.6px;color:#000;transform:scaleX(0.91);transform-origin:0 0;">Hy<u>p</u>erlink</div>
<div class="a" style="left:86px;top:187px;width:338px;height:155px;border:1px solid #7f7f7f;background:#f0f0f0;box-shadow:0 3px 14px rgba(0,0,0,0.28);"></div>
<div class="a" style="left:87px;top:188px;width:336px;height:24px;background:#fff;"></div>
<svg class="a" style="left:93.7px;top:190.9px" width="14" height="15" viewBox="0 0 14 15"><rect x="0.4" y="2.1" width="3" height="8.6" fill="#ee6a8a"/><rect x="2.1" y="0.9" width="9.5" height="9.6" fill="#e3164b"/><rect x="11.4" y="3.3" width="0.9" height="11" fill="#a90d39"/><rect x="1.4" y="10.3" width="10.9" height="3.9" fill="#a00d37"/><polygon points="4.2,8.8 6.3,3.0 8.4,3.0 10.5,8.8 8.9,8.8 7.35,4.9 5.8,8.8" fill="#fff"/><rect x="3.8" y="11.6" width="5.4" height="1.1" fill="#f0b8c8"/></svg>
<div class="t" style="left:111.00px;top:194.72px;font-size:9.9px;color:#000;transform:scaleX(0.94);transform-origin:0 0;">Find and Replace</div>
<svg class="a" style="left:405.4px;top:193.9px" width="10.2" height="10.2"><path d="M1,1L9.2,9.2M9.2,1L1,9.2" stroke="#222" stroke-width="1.0"/></svg>
<svg class="a" style="left:95px;top:229.5px" width="28" height="28">
<defs><radialGradient id="ib" cx="0.35" cy="0.3" r="0.8"><stop offset="0" stop-color="#6f9bf0"/><stop offset="0.55" stop-color="#2f5cc8"/><stop offset="1" stop-color="#1c3ea8"/></radialGradient>
<linearGradient id="ring" x1="0" y1="0" x2="0" y2="1"><stop offset="0" stop-color="#d8d8d8"/><stop offset="1" stop-color="#9a9a9a"/></linearGradient></defs>
<circle cx="14.1" cy="14.1" r="12.6" fill="#fff" stroke="#8a8a8a" stroke-width="1"/>
<circle cx="14.1" cy="14.1" r="10.8" fill="url(#ib)" stroke="#1b3a99" stroke-width="0.6"/>
<circle cx="14" cy="7.6" r="1.9" fill="#f4f4f4"/>
<rect x="12.3" y="10.9" width="3.5" height="11.3" rx="1.2" fill="#e8e8e8"/>
</svg>
<div class="t" style="left:142.30px;top:220.17px;font-size:9.6px;color:#000;transform:scaleX(0.91);transform-origin:0 0;">The system has finished searching the drawing.</div>
<div class="t" style="left:150.00px;top:266.27px;font-size:9.6px;color:#000;transform:scaleX(0.91);transform-origin:0 0;">0 matches found.</div>
<div class="a" style="left:354px;top:314.4px;width:59px;height:17.0px;border:2px solid #0078d7;background:#e1e1e1;"></div>
<div class="t" style="left:358.20px;width:50px;text-align:center;top:318.47px;font-size:9.6px;color:#000;transform:scaleX(0.91)">OK</div>
</body></html>
